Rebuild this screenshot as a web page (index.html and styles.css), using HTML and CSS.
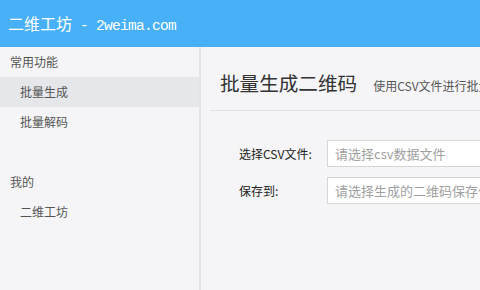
FILE: index.html
```html
<!DOCTYPE html>
<html lang="zh-CN">
<head>
    <meta charset="UTF-8">
    <meta name="viewport" content="width=device-width, initial-scale=1.0">
    <title>二维工坊 - 2weima.com</title>
    <link rel="stylesheet" href="styles.css">
</head>
<body>
    <div class="topbar">
        <span class="brand">二维工坊</span><span class="domain"> - 2weima.com</span>
    </div>
    <div class="layout">
        <div class="sidebar">
            <div class="group">
                <div class="group-title">常用功能</div>
                <div class="nav-item active">批量生成</div>
                <div class="nav-item">批量解码</div>
            </div>
            <div class="group">
                <div class="group-title">我的</div>
                <div class="nav-item">二维工坊</div>
            </div>
        </div>
        <div class="main">
            <div class="page-head">
                <h1 class="page-title">批量生成二维码</h1>
                <span class="page-desc">使用CSV文件进行批量生成二维码</span>
            </div>
            <div class="form">
                <div class="form-row">
                    <label class="form-label" for="csvFile">选择CSV文件:</label>
                    <input class="form-input" type="text" id="csvFile" placeholder="请选择csv数据文件">
                </div>
                <div class="form-row">
                    <label class="form-label" for="saveDir">保存到:</label>
                    <input class="form-input" type="text" id="saveDir" placeholder="请选择生成的二维码保存位置">
                </div>
            </div>
        </div>
    </div>
</body>
</html>
```

FILE: styles.css
```css
html, body {
    margin: 0;
    height: 100%;
    overflow: hidden;
}
body {
    font-family: "Noto Sans CJK SC", "Liberation Sans", sans-serif;
    background-color: #f5f5f7;
    color: #555;
    display: flex;
    flex-direction: column;
}
.topbar {
    height: 47px;
    line-height: 47px;
    padding-left: 8px;
    background-color: #48b0f7;
    color: white;
    font-size: 16px;
    white-space: nowrap;
    flex-shrink: 0;
}
.domain {
    font-family: "Liberation Mono", monospace;
    font-size: 14.5px;
    letter-spacing: -0.7px;
}
.layout {
    display: flex;
    flex: 1;
    min-height: 0;
}
.sidebar {
    width: 199px;
    border-right: 2px solid #e3e4e6;
    flex-shrink: 0;
}
.group {
    margin-bottom: 30px;
}
.group-title {
    height: 30px;
    line-height: 30px;
    padding-left: 10px;
    font-size: 12px;
}
.nav-item {
    height: 30px;
    line-height: 30px;
    padding-left: 20px;
    font-size: 12px;
}
.nav-item.active {
    background-color: #e6e7ea;
}
.main {
    flex: 1;
    padding-left: 9px;
    overflow: hidden;
}
.page-head {
    display: flex;
    align-items: baseline;
    padding: 24px 0 15px 10px;
    border-bottom: 1px solid #e2e2e4;
    white-space: nowrap;
}
.page-title {
    margin: 0;
    font-size: 19.6px;
    font-weight: normal;
    line-height: 24px;
    color: #333;
}
.page-desc {
    margin-left: 16px;
    font-size: 12px;
}
.form {
    padding: 29px 0 0 29px;
}
.form-row {
    display: flex;
    align-items: center;
    margin-bottom: 10px;
}
.form-label {
    width: 88px;
    flex-shrink: 0;
    font-size: 12px;
    color: #222;
}
.form-input {
    width: 300px;
    height: 27px;
    box-sizing: border-box;
    padding: 0 7px;
    border: 1px solid #d6d6d6;
    background: white;
    font-family: inherit;
    font-size: 13px;
    flex-shrink: 0;
}
.form-input::placeholder {
    color: #a0a0a0;
}
```
